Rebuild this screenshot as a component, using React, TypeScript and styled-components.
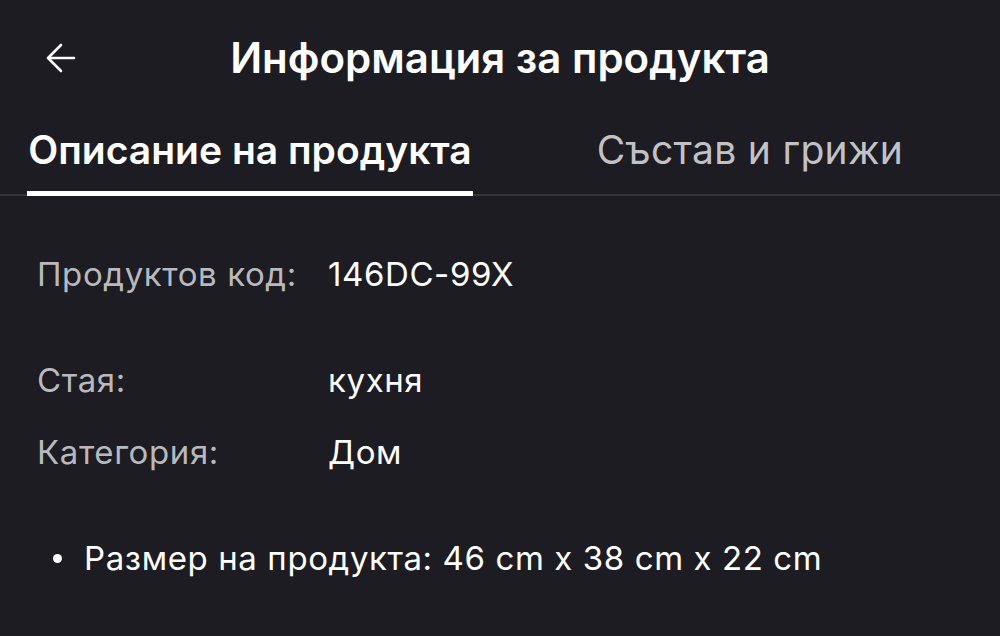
import React, { useEffect } from "react";
import styled, { createGlobalStyle } from "styled-components";

const Global = createGlobalStyle`
  html, body { margin: 0; padding: 0; background: #1c1c22; }
  body { font-family: Inter, "Noto Sans", sans-serif; color: #fff; }
`;

const Page = styled.div`
  width: 1000px;
  height: 636px;
  background: #1c1c22;
  overflow: hidden;
`;

const Header = styled.header`
  position: relative;
  height: 118px;
  display: flex;
  align-items: center;
  justify-content: center;
`;

const BackButton = styled.button`
  position: absolute;
  left: 44px;
  top: 41px;
  width: 34px;
  height: 34px;
  padding: 0;
  border: none;
  background: transparent;
  color: #fff;
  display: flex;
  align-items: center;
  justify-content: center;
`;

const Title = styled.h1`
  margin: 0 0 2px;
  font-size: 42px;
  line-height: 50px;
  font-weight: 600;
  color: #fff;
`;

const Tabs = styled.nav`
  display: grid;
  grid-template-columns: 1fr 1fr;
  border-bottom: 2px solid #34353b;
  height: 76px;
`;

const Tab = styled.div`
  display: flex;
  justify-content: center;
  align-items: flex-end;
`;

const TabLabel = styled.span<{ $active?: boolean }>`
  display: inline-block;
  padding: 0 1px 18px;
  font-size: 39px;
  line-height: 46px;
  font-weight: ${(p) => (p.$active ? 600 : 400)};
  letter-spacing: ${(p) => (p.$active ? "0" : "0.3px")};
  color: ${(p) => (p.$active ? "#ffffff" : "#c2c2c6")};
  border-bottom: 5px solid ${(p) => (p.$active ? "#ffffff" : "transparent")};
  margin-bottom: -2px;
`;

const Content = styled.section`
  padding: 58px 0 0 37px;
`;

const Row = styled.div<{ $gap: number }>`
  display: grid;
  grid-template-columns: 291px 1fr;
  font-size: 33px;
  letter-spacing: 0.6px;
  line-height: 40px;
  margin-bottom: ${(p) => p.$gap}px;
`;

const Label = styled.span`
  color: #b9b9bd;
`;

const Value = styled.span`
  color: #fff;
`;

const List = styled.ul`
  margin: 66px 0 0;
  padding: 0 0 0 84px;
  list-style: none;
`;

const Item = styled.li`
  position: relative;
  font-size: 33px;
  letter-spacing: 0.6px;
  line-height: 40px;
  color: #fff;
  &::before {
    content: "";
    position: absolute;
    left: -31px;
    top: 16px;
    width: 9px;
    height: 9px;
    border-radius: 50%;
    background: #fff;
  }
`;

export default function App() {
  useEffect(() => {
    document.documentElement.lang = "bg";
  }, []);
  return (
    <Page lang="bg">
      <Global />
      <Header>
        <BackButton aria-label="Назад">
          <svg width="30" height="30" viewBox="0 0 30 30" fill="none" stroke="#fff" strokeWidth="2.6" strokeLinecap="round" strokeLinejoin="round">
            <path d="M28 15H3" />
            <path d="M15 2L2 15l13 13" />
          </svg>
        </BackButton>
        <Title>Информация за продукта</Title>
      </Header>
      <Tabs>
        <Tab>
          <TabLabel $active>Описание на продукта</TabLabel>
        </Tab>
        <Tab>
          <TabLabel>Състав и грижи</TabLabel>
        </Tab>
      </Tabs>
      <Content>
        <Row $gap={66}>
          <Label>Продуктов код:</Label>
          <Value>146DC-99X</Value>
        </Row>
        <Row $gap={32}>
          <Label>Стая:</Label>
          <Value>кухня</Value>
        </Row>
        <Row $gap={0}>
          <Label>Категория:</Label>
          <Value>Дом</Value>
        </Row>
      </Content>
      <List>
        <Item>Размер на продукта: 46 cm x 38 cm x 22 cm</Item>
      </List>
    </Page>
  );
}
